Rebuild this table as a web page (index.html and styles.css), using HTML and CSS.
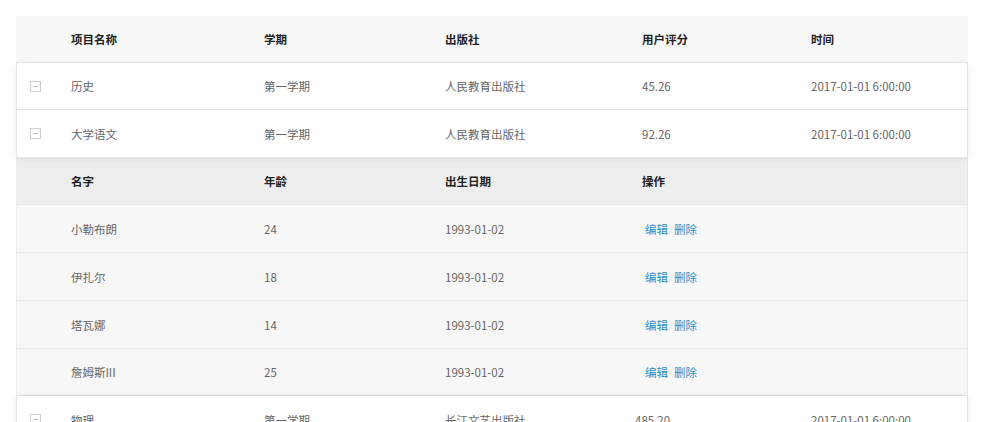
FILE: index.html
```html
<!DOCTYPE html>
<html lang="zh-CN">
<head>
  <meta charset="UTF-8">
  <title>表格展开</title>
  <link rel="stylesheet" href="styles.css">
</head>
<body>
  <div class="table">
    <div class="row head">
      <div class="cell"></div>
      <div class="cell">项目名称</div>
      <div class="cell">学期</div>
      <div class="cell">出版社</div>
      <div class="cell">用户评分</div>
      <div class="cell">时间</div>
    </div>

    <div class="group">
      <div class="row">
        <div class="cell"><span class="toggle"></span></div>
        <div class="cell">历史</div>
        <div class="cell">第一学期</div>
        <div class="cell">人民教育出版社</div>
        <div class="cell">45.26</div>
        <div class="cell">2017-01-01 6:00:00</div>
      </div>
      <div class="row">
        <div class="cell"><span class="toggle"></span></div>
        <div class="cell">大学语文</div>
        <div class="cell">第一学期</div>
        <div class="cell">人民教育出版社</div>
        <div class="cell">92.26</div>
        <div class="cell">2017-01-01 6:00:00</div>
      </div>
    </div>

    <div class="sub">
      <div class="row sub-head">
        <div class="cell"></div>
        <div class="cell">名字</div>
        <div class="cell">年龄</div>
        <div class="cell">出生日期</div>
        <div class="cell">操作</div>
        <div class="cell"></div>
      </div>
      <div class="row">
        <div class="cell"></div>
        <div class="cell">小勒布朗</div>
        <div class="cell">24</div>
        <div class="cell">1993-01-02</div>
        <div class="cell ops"><a href="#">编辑</a><a href="#">删除</a></div>
        <div class="cell"></div>
      </div>
      <div class="row">
        <div class="cell"></div>
        <div class="cell">伊扎尔</div>
        <div class="cell">18</div>
        <div class="cell">1993-01-02</div>
        <div class="cell ops"><a href="#">编辑</a><a href="#">删除</a></div>
        <div class="cell"></div>
      </div>
      <div class="row">
        <div class="cell"></div>
        <div class="cell">塔瓦娜</div>
        <div class="cell">14</div>
        <div class="cell">1993-01-02</div>
        <div class="cell ops"><a href="#">编辑</a><a href="#">删除</a></div>
        <div class="cell"></div>
      </div>
      <div class="row">
        <div class="cell"></div>
        <div class="cell">詹姆斯III</div>
        <div class="cell">25</div>
        <div class="cell">1993-01-02</div>
        <div class="cell ops"><a href="#">编辑</a><a href="#">删除</a></div>
        <div class="cell"></div>
      </div>
    </div>

    <div class="group">
      <div class="row">
        <div class="cell"><span class="toggle"></span></div>
        <div class="cell">物理</div>
        <div class="cell">第一学期</div>
        <div class="cell">长江文艺出版社</div>
        <div class="cell score-shift">485.20</div>
        <div class="cell">2017-01-01 6:00:00</div>
      </div>
    </div>
  </div>
</body>
</html>
```

FILE: styles.css
```css
html, body {
  margin: 0; padding: 0;
  background: #fff;
  font-family: "Noto Sans CJK SC", "Noto Sans", sans-serif;
  font-size: 11.5px;
  color: #666;
  overflow: hidden;
}

.table {
  margin: 16px 16px 0 16px;
  width: 952px;
}

/* rows */
.row {
  display: grid;
  grid-template-columns: 55px 193px 181px 197px 169px 1fr;
  height: 46px;
  align-items: center;
  border-bottom: 1px solid #e4e4e4;
}
.cell { white-space: nowrap; }

.row.head {
  background: #f8f8f8;
  color: #222;
  font-weight: bold;
  border-bottom: 1px solid #e6e6e6;
}

/* bordered blocks lose 1px to the left border */
.group .row, .sub .row {
  grid-template-columns: 54px 193px 181px 197px 169px 1fr;
}

.group {
  background: #fff;
  border-left: 1px solid #e6e6e6;
  border-right: 1px solid #e2e2e2;
  box-shadow: 0 2px 8px rgba(0,0,0,0.08);
  position: relative;
  z-index: 1;
}
.group .row { border-bottom-color: #e2e2e2; }
.group .row:last-child { border-bottom: none; height: 47px; }
.group .row .cell:first-child { padding-left: 13px; }

/* expand toggle */
.toggle {
  display: block;
  width: 9px; height: 9px;
  border: 1px solid #cfcfcf;
  position: relative;
}
.toggle:after {
  content: "";
  position: absolute;
  left: 2px; right: 2px; top: 4px;
  height: 1px;
  background: #bdbdbd;
}

/* sub table */
.sub {
  background: #f7f7f7;
  border-right: 1px solid #e6e6e6;
  border-left: 1px solid #ededed;
}
.sub .row { height: 47px; border-bottom-color: #e8e8e8; }
.sub .row.sub-head {
  background: #eeeeee;
  color: #222;
  font-weight: bold;
}
.sub .row:last-child { border-bottom: 1px solid #dedede; height: 46px; }

.ops a {
  color: #2b8fc6;
  text-decoration: none;
  margin-right: 6px;
}
.ops a:first-child { margin-left: 3px; }

.score-shift { margin-left: -7px; }
```
